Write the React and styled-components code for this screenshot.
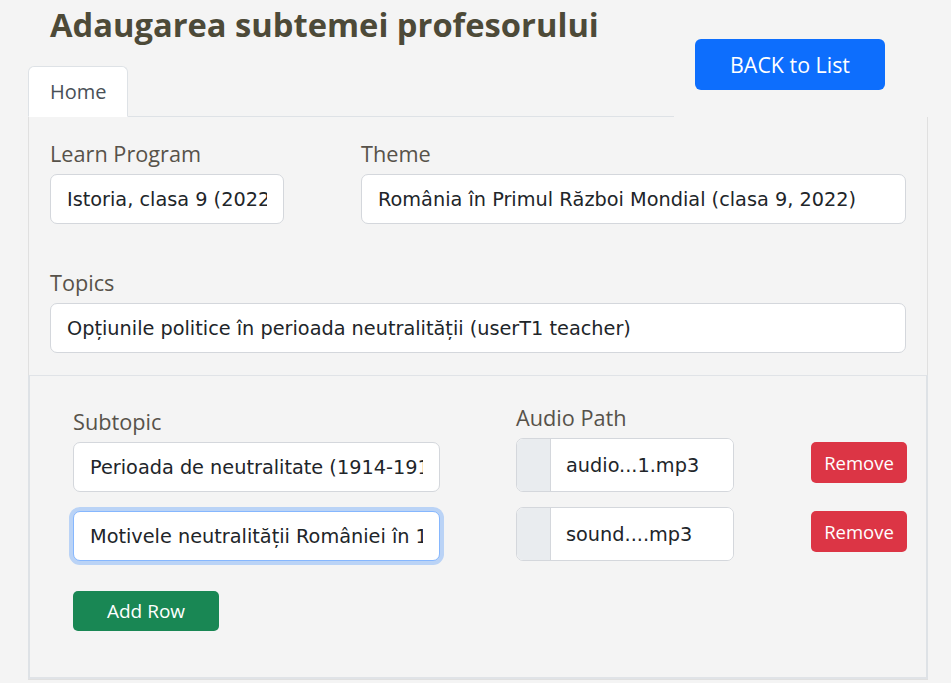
import React from 'react';
import styled, { createGlobalStyle } from 'styled-components';

const GlobalStyle = createGlobalStyle`
  body {
    margin: 0;
    background-color: #f4f4f4;
    font-family: "Open Sans", "Noto Sans", sans-serif;
  }
  * { box-sizing: border-box; }
`;

const Page = styled.div`
  width: 900px;
  margin-left: 28px;
  padding-top: 6px;
`;

const Header = styled.div`
  display: flex;
  justify-content: space-between;
`;

const HeaderLeft = styled.div`
  display: flex;
  flex-direction: column;
`;

const Title = styled.h2`
  margin: 0 0 22px 22px;
  font-size: 32.7px;
  line-height: 38px;
  font-weight: 700;
  color: #4d4a38;
`;

const TabBar = styled.div`
  width: 646px;
  display: flex;
  border-bottom: 1px solid #dee2e6;
`;

const Tab = styled.div`
  width: 100px;
  height: 51px;
  margin-bottom: -1px;
  padding: 0 21px;
  display: flex;
  align-items: center;
  font-size: 20px;
  color: #495057;
  background-color: #fff;
  border: 1px solid #dee2e6;
  border-bottom-color: #fff;
  border-radius: 6px 6px 0 0;
`;

const BackButton = styled.button`
  width: 190px;
  height: 51px;
  margin: 33px 43px 0 0;
  border: none;
  border-radius: 6px;
  background-color: #0d6efd;
  color: #fff;
  font-family: "Open Sans", sans-serif;
  font-size: 21.4px;
`;

const Panel = styled.div`
  border: 1px solid #e0e0e0;
  border-top: none;
`;

const Fields = styled.div`
  padding: 22px 21px 22px 21px;
  display: grid;
  grid-template-columns: 234px 1fr;
  column-gap: 77px;
  row-gap: 44px;
`;

const Field = styled.div`
  display: flex;
  flex-direction: column;
  grid-column: ${p => (p.$wide ? '1 / -1' : 'auto')};
`;

const Label = styled.label`
  display: block;
  font-size: 21.7px;
  line-height: 30px;
  color: #57524a;
  margin-bottom: ${p => 5 - (p.$shift || 0)}px;
  padding-top: ${p => p.$shift || 0}px;
`;

const Input = styled.input`
  width: 100%;
  height: 50px;
  padding: 0 16px;
  font-family: Tahoma, "DejaVu Sans", sans-serif;
  font-size: 19.3px;
  color: #212529;
  background-color: #fff;
  border: 1px solid ${p => (p.$focused ? '#86b7fe' : '#d4d7dc')};
  border-radius: 7px;
  outline: none;
  box-shadow: ${p => (p.$focused ? '0 0 0 4px rgba(13, 110, 253, 0.25)' : 'none')};
`;

const RowsCard = styled.div`
  border-top: 1px solid #e0e3e7;
  border-bottom: 2px solid #e0e3e7;
  border-left: 2px solid #dee2e6;
  border-right: 2px solid #dee2e6;
  margin: 0 -1px;
  padding: 27px 21px 46px 43px;
`;

const RowsGrid = styled.div`
  display: grid;
  grid-template-columns: 367px 218px 96px;
  column-gap: 76px;
  row-gap: 15px;
  align-items: start;
`;

const HeadCell = styled.div`
  margin-bottom: -15px;
`;

const SubInput = styled(Input)`
  margin-top: 4px;
`;

const InputGroup = styled.div`
  display: flex;
  height: 54px;
  border: 1px solid #d4d7dc;
  border-radius: 7px;
  overflow: hidden;
  background-color: #fff;
`;

const Addon = styled.span`
  width: 34px;
  background-color: #e9ecef;
  border-right: 1px solid #d4d7dc;
`;

const GroupInput = styled.input`
  flex: 1;
  min-width: 0;
  padding: 0 15px;
  border: none;
  outline: none;
  font-family: Tahoma, "DejaVu Sans", sans-serif;
  font-size: 19.3px;
  color: #212529;
`;

const Button = styled.button`
  border: none;
  color: #fff;
  font-family: "Open Sans", sans-serif;
  font-size: ${p => p.$size || 18}px;
  border-radius: 5px;
  background-color: ${p => p.$bg};
`;

const RemoveButton = styled(Button)`
  width: 96px;
  height: 41px;
  margin-top: 4px;
  margin-left: 1px;
  padding: 0;
`;

const AddButton = styled(Button)`
  width: 146px;
  height: 40px;
  margin-top: 30px;
  padding: 0;
`;

const rows = [
  { subtopic: 'Perioada de neutralitate (1914-1916)', audio: 'audio...1.mp3' },
  { subtopic: 'Motivele neutralității României în 1914', audio: 'sound....mp3', focused: true },
];

function App() {
  return (
    <Page>
      <GlobalStyle />
      <Header>
        <HeaderLeft>
          <Title>Adaugarea subtemei profesorului</Title>
          <TabBar>
            <Tab>Home</Tab>
          </TabBar>
        </HeaderLeft>
        <BackButton>BACK to List</BackButton>
      </Header>

      <Panel>
        <Fields>
          <Field>
            <Label>Learn Program</Label>
            <Input readOnly value="Istoria, clasa 9 (2022)" />
          </Field>
          <Field>
            <Label>Theme</Label>
            <Input readOnly value="România în Primul Război Mondial (clasa 9, 2022)" />
          </Field>
          <Field $wide>
            <Label>Topics</Label>
            <Input readOnly value="Opțiunile politice în perioada neutralității (userT1 teacher)" />
          </Field>
        </Fields>

        <RowsCard>
          <RowsGrid>
            <HeadCell><Label $shift={4}>Subtopic</Label></HeadCell>
            <HeadCell><Label>Audio Path</Label></HeadCell>
            <HeadCell />
            {rows.map((row, i) => (
              <React.Fragment key={i}>
                <SubInput readOnly value={row.subtopic} $focused={row.focused} />
                <InputGroup>
                  <Addon />
                  <GroupInput readOnly value={row.audio} />
                </InputGroup>
                <RemoveButton $bg="#dc3545" $size={18.5}>Remove</RemoveButton>
              </React.Fragment>
            ))}
          </RowsGrid>
          <AddButton $bg="#198754" $size={19}>Add Row</AddButton>
        </RowsCard>
      </Panel>
    </Page>
  );
}

export default App;
